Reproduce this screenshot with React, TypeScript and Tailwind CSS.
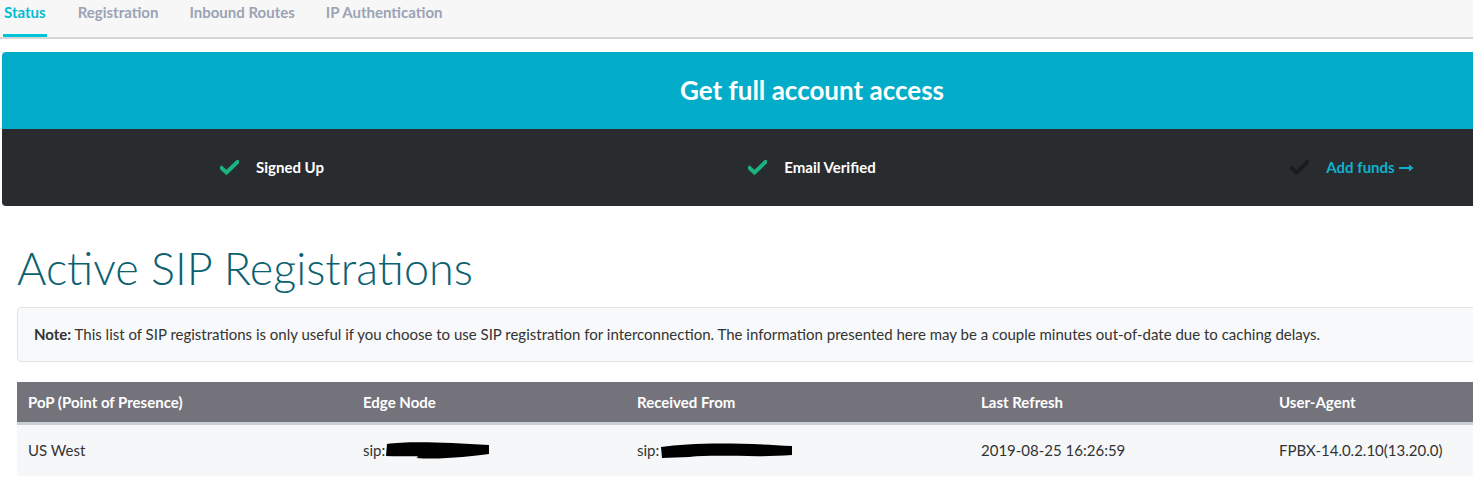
import React from "react";

const font = { fontFamily: "Lato, 'Noto Sans', sans-serif" };

function Check({ color }: { color: string }) {
  return (
    <svg width="19" height="15" viewBox="0 0 19 15" className="shrink-0">
      <path d="M1.5 8 L6.5 12.5 L17.5 2" fill="none" stroke={color} strokeWidth="4" strokeLinecap="square" />
    </svg>
  );
}

function Blob({ w, variant }: { w: number; variant: number }) {
  return (
    <svg width={w} height="20" viewBox={`0 0 ${w} 20`} className="shrink-0">
      {variant === 0 ? (
        <path d={`M2 3 C20 0 60 1 ${w - 2} 4 L${w - 2} 13 C${w - 20} 15 ${w - 50} 19 ${w - 75} 17 C40 14 20 16 1 15 Z`} fill="#000" />
      ) : (
        <path d={`M2 6 C30 2 70 1 ${w - 3} 5 L${w - 3} 14 C${w - 40} 17 60 13 30 16 L3 17 Z`} fill="#000" />
      )}
    </svg>
  );
}

export default function App() {
  return (
    <div className="w-[1473px] h-[483px] overflow-hidden bg-white" style={font}>
      <div className="w-[1640px]">
        {/* Tabs */}
        <div className="h-[39px] bg-[#f7f7f7] border-b-2 border-[#d6d6d6] flex items-end pl-[3px] gap-[31px]">
          <div className="h-full flex flex-col justify-between">
            <span className="pt-[2px] px-[1px] text-[15px] font-bold text-[#00bcd4] leading-[20px]">Status</span>
            <span className="h-[3px] bg-[#00c4dc] w-full" />
          </div>
          {["Registration", "Inbound Routes", "IP Authentication"].map((t) => (
            <div key={t} className="h-full flex flex-col">
              <span className="pt-[2px] text-[15px] font-bold text-[#9ba3b4] leading-[20px]">{t}</span>
            </div>
          ))}
        </div>

        {/* Banner */}
        <div className="mt-[13px] ml-[2px] w-[1620px] rounded-[4px] overflow-hidden">
          <div className="h-[77px] bg-[#03adc9] flex items-center justify-center">
            <span className="text-[26px] font-bold text-white">Get full account access</span>
          </div>
          <div className="h-[77px] bg-[#292c2e] grid grid-cols-3 items-center">
            <div className="flex items-center justify-center gap-[17px]">
              <Check color="#1bb37e" />
              <span className="text-[15px] font-bold text-white">Signed Up</span>
            </div>
            <div className="flex items-center justify-center gap-[17px]">
              <Check color="#1bb37e" />
              <span className="text-[15px] font-bold text-white">Email Verified</span>
            </div>
            <div className="flex items-center justify-center gap-[17px]">
              <Check color="#1a1c1d" />
              <span className="text-[15px] font-bold text-[#0fb1cf] flex items-center gap-[4px]">
                Add funds
                <svg width="15" height="8" viewBox="0 0 15 8">
                  <path d="M0 4 H12" stroke="#0fb1cf" strokeWidth="2" />
                  <path d="M10 0.5 L14.5 4 L10 7.5 Z" fill="#0fb1cf" />
                </svg>
              </span>
            </div>
          </div>
        </div>

        {/* Heading */}
        <div className="pl-[17px]">
          <h1 className="mt-[36px] text-[45px] font-light leading-[52px] text-[#0c6171]">Active SIP Registrations</h1>
          <div className="mt-[13px] h-[55px] bg-[#f8f9fa] border border-[#e3e3e3] rounded-[4px] flex items-center pl-[16px] text-[15px] text-[#333]">
            <span>
              <b className="font-bold">Note:</b> This list of SIP registrations is only useful if you choose to use SIP registration for interconnection. The information presented here may be a couple minutes out-of-date due to caching delays.
            </span>
          </div>

          {/* Table */}
          <div className="mt-[20px] text-[15px]">
            <div className="h-[43px] bg-[#74737b] border-b-[3px] border-[#c9cfd6] grid grid-cols-[335px_274px_344px_298px_1fr] items-center pl-[11px] text-white font-bold">
              <span>PoP (Point of Presence)</span>
              <span>Edge Node</span>
              <span>Received From</span>
              <span>Last Refresh</span>
              <span>User-Agent</span>
            </div>
            <div className="h-[51px] bg-[#f6f7f9] grid grid-cols-[335px_274px_344px_298px_1fr] items-center pl-[11px] text-[#333]">
              <span>US West</span>
              <span className="flex items-center">
                sip:
                <Blob w={106} variant={0} />
              </span>
              <span className="flex items-center">
                sip:
                <Blob w={136} variant={1} />
              </span>
              <span>2019-08-25 16:26:59</span>
              <span>FPBX-14.0.2.10(13.20.0)</span>
            </div>
          </div>
        </div>
      </div>
    </div>
  );
}
